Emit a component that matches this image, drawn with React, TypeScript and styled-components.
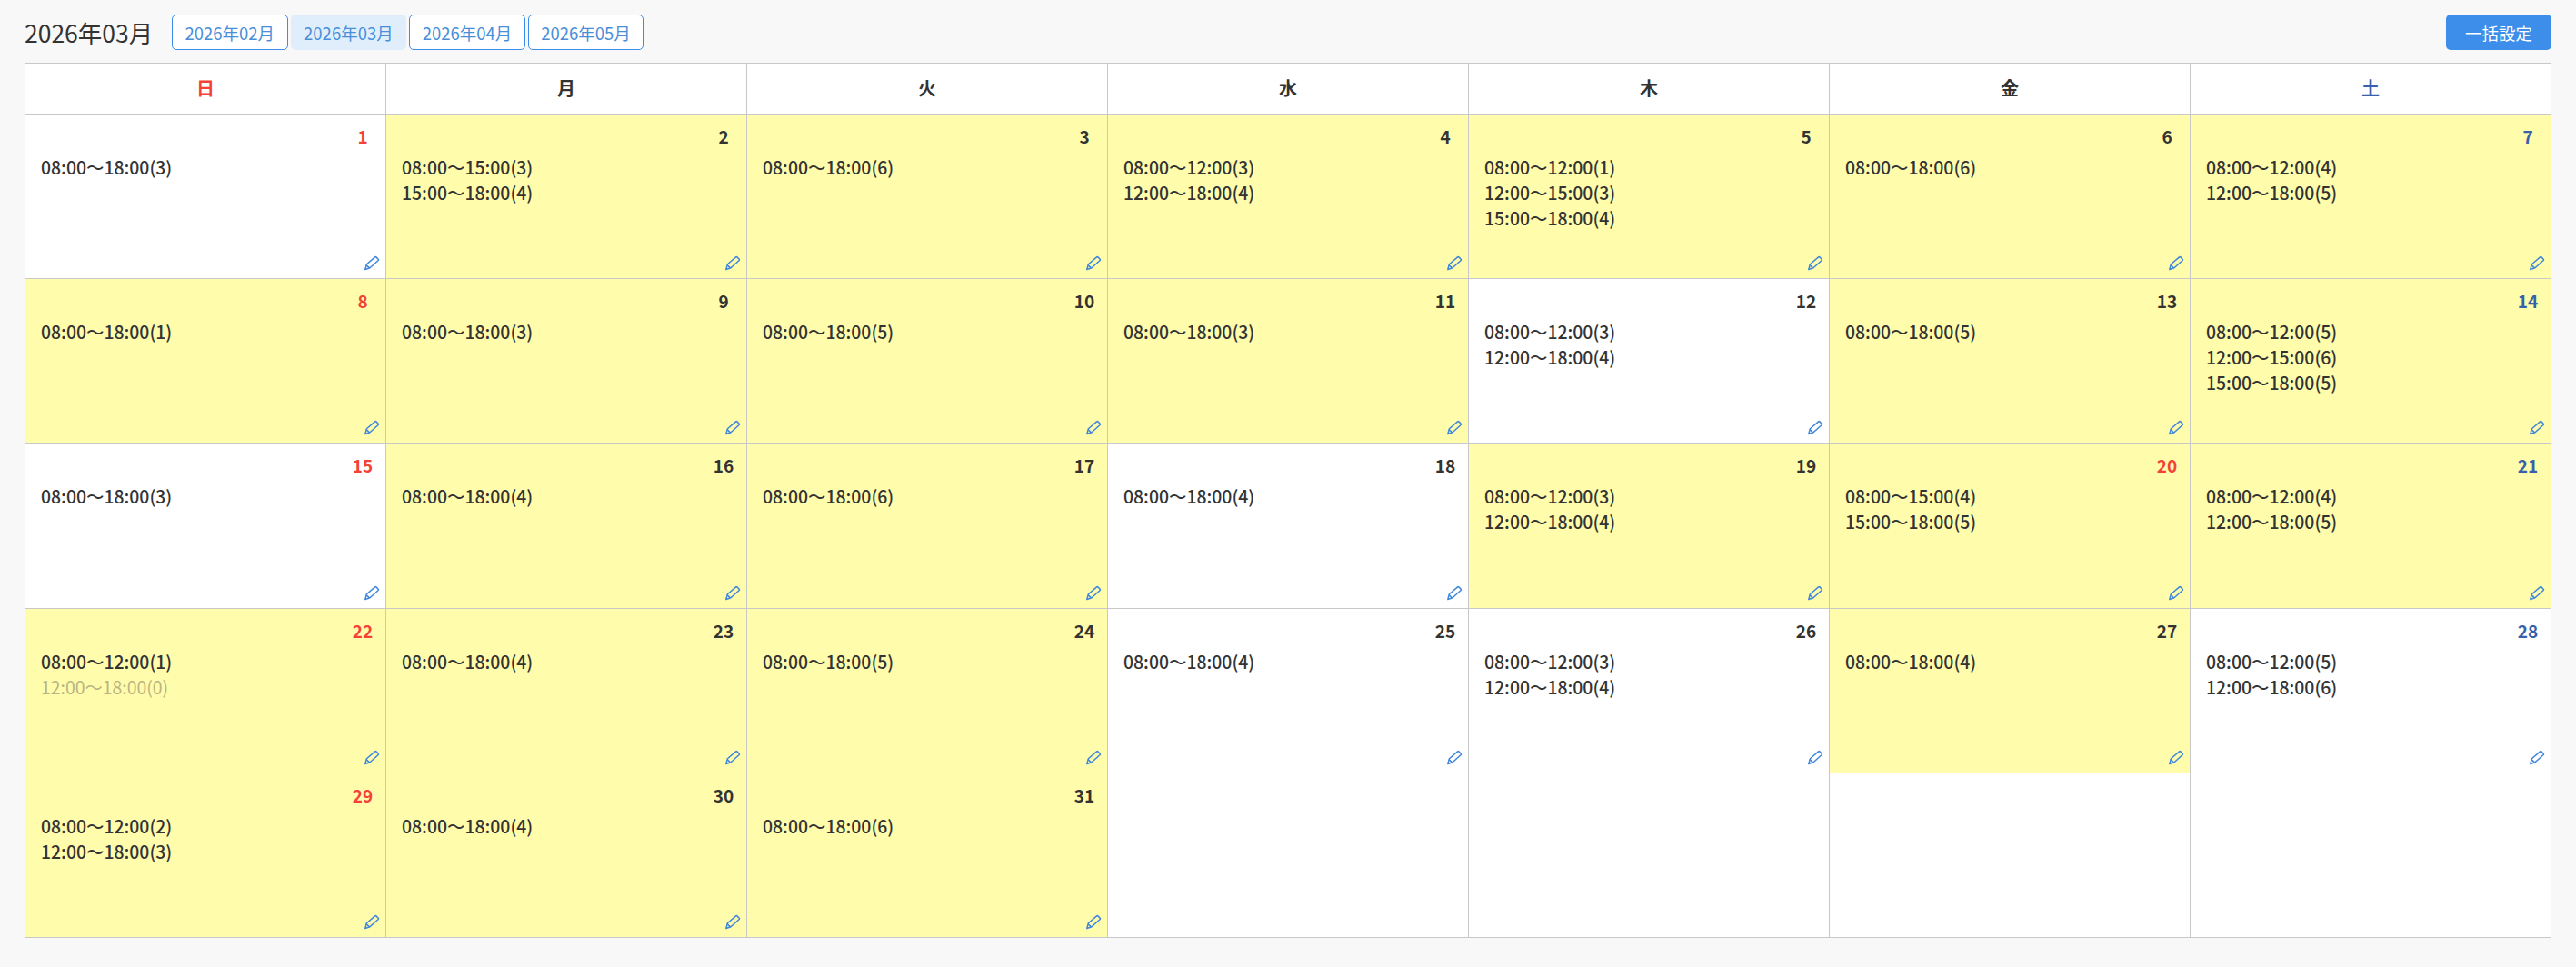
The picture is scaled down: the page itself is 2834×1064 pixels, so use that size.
import styled, { createGlobalStyle } from "styled-components";

const GlobalStyle = createGlobalStyle`
  html, body {
    margin: 0;
    padding: 0;
    background: #f8f8f8;
  }
  body {
    font-family: "Noto Sans CJK JP", "Noto Sans", sans-serif;
    color: #333;
  }
`;

const MONTHS = ["2026年02月", "2026年03月", "2026年04月", "2026年05月"];
const WEEK = ["日", "月", "火", "水", "木", "金", "土"];

type Slot = [string, number];
type Day = { date: number; open: boolean; holiday?: boolean; slots: Slot[] };

const FULL = "08:00〜18:00";
const AM = "08:00〜12:00";
const PM = "12:00〜18:00";

const DAYS: Day[] = [
  { date: 1, open: false, slots: [[FULL, 3]] },
  { date: 2, open: true, slots: [["08:00〜15:00", 3], ["15:00〜18:00", 4]] },
  { date: 3, open: true, slots: [[FULL, 6]] },
  { date: 4, open: true, slots: [[AM, 3], [PM, 4]] },
  { date: 5, open: true, slots: [[AM, 1], ["12:00〜15:00", 3], ["15:00〜18:00", 4]] },
  { date: 6, open: true, slots: [[FULL, 6]] },
  { date: 7, open: true, slots: [[AM, 4], [PM, 5]] },
  { date: 8, open: true, slots: [[FULL, 1]] },
  { date: 9, open: true, slots: [[FULL, 3]] },
  { date: 10, open: true, slots: [[FULL, 5]] },
  { date: 11, open: true, slots: [[FULL, 3]] },
  { date: 12, open: false, slots: [[AM, 3], [PM, 4]] },
  { date: 13, open: true, slots: [[FULL, 5]] },
  { date: 14, open: true, slots: [[AM, 5], ["12:00〜15:00", 6], ["15:00〜18:00", 5]] },
  { date: 15, open: false, slots: [[FULL, 3]] },
  { date: 16, open: true, slots: [[FULL, 4]] },
  { date: 17, open: true, slots: [[FULL, 6]] },
  { date: 18, open: false, slots: [[FULL, 4]] },
  { date: 19, open: true, slots: [[AM, 3], [PM, 4]] },
  { date: 20, open: true, holiday: true, slots: [["08:00〜15:00", 4], ["15:00〜18:00", 5]] },
  { date: 21, open: true, slots: [[AM, 4], [PM, 5]] },
  { date: 22, open: true, slots: [[AM, 1], [PM, 0]] },
  { date: 23, open: true, slots: [[FULL, 4]] },
  { date: 24, open: true, slots: [[FULL, 5]] },
  { date: 25, open: false, slots: [[FULL, 4]] },
  { date: 26, open: false, slots: [[AM, 3], [PM, 4]] },
  { date: 27, open: true, slots: [[FULL, 4]] },
  { date: 28, open: false, slots: [[AM, 5], [PM, 6]] },
  { date: 29, open: true, slots: [[AM, 2], [PM, 3]] },
  { date: 30, open: true, slots: [[FULL, 4]] },
  { date: 31, open: true, slots: [[FULL, 6]] },
];

const dayColor = (index: number, holiday?: boolean) => {
  if (holiday || index % 7 === 0) return "#f44336";
  if (index % 7 === 6) return "#3761ab";
  return "#333";
};

const Page = styled.div`
  padding: 16px 27px 33px;
`;

const Toolbar = styled.div`
  display: flex;
  align-items: center;
  height: 39px;
  margin-bottom: 14px;
`;

const Title = styled.h2`
  width: 162px;
  margin: 0;
  font-size: 26.5px;
  font-weight: 400;
  line-height: 39px;
  color: #333;
`;

const MonthList = styled.div`
  display: flex;
  gap: 3px;
`;

const MonthButton = styled.button<{ $active?: boolean }>`
  width: 127.6px;
  height: 39px;
  padding: 0;
  border: 1px solid ${(p) => (p.$active ? "#e0eefc" : "#3d8eeb")};
  border-radius: 5px;
  background: ${(p) => (p.$active ? "#e0eefc" : "#fff")};
  color: #4a8ed8;
  font-family: inherit;
  font-size: 18.5px;
`;

const BulkButton = styled.button`
  width: 116px;
  height: 39px;
  margin-left: auto;
  padding: 0;
  border: none;
  border-radius: 5px;
  background: #3d8eeb;
  color: #fff;
  font-family: inherit;
  font-size: 18.5px;
`;

const Calendar = styled.div`
  display: grid;
  grid-template-columns: repeat(7, 1fr);
  grid-template-rows: 56px repeat(5, 181.2px);
  border-top: 1px solid #c8c8c8;
  border-left: 1px solid #c8c8c8;
  background: #fff;
`;

const HeadCell = styled.div<{ $color: string }>`
  display: flex;
  align-items: center;
  justify-content: center;
  padding-bottom: 2px;
  border-right: 1px solid #c8c8c8;
  border-bottom: 1px solid #c8c8c8;
  color: ${(p) => p.$color};
  font-size: 20px;
  font-weight: 700;
`;

const DayCell = styled.div<{ $open?: boolean }>`
  position: relative;
  box-sizing: border-box;
  padding-top: 9px;
  border-right: 1px solid #c8c8c8;
  border-bottom: 1px solid #c8c8c8;
  background: ${(p) => (p.$open ? "#fffcab" : "#fff")};
`;

const DateLabel = styled.div<{ $color: string }>`
  width: 30px;
  height: 30px;
  margin: 0 10px 5px auto;
  text-align: center;
  color: ${(p) => p.$color};
  font-size: 19px;
  font-weight: 700;
  line-height: 30px;
`;

const SlotList = styled.div`
  padding: 0 17px;
`;

const SlotRow = styled.div<{ $empty?: boolean }>`
  color: ${(p) => (p.$empty ? "#b9b583" : "#333")};
  font-size: 19.4px;
  font-weight: ${(p) => (p.$empty ? 400 : 500)};
  line-height: 28px;
`;

const EditIcon = styled.svg`
  position: absolute;
  right: 6px;
  bottom: 8px;
  width: 18px;
  height: 17px;
  color: #3f86dd;
`;

function Pencil() {
  return (
    <EditIcon viewBox="0 0 18 16" fill="none" stroke="currentColor" strokeWidth="1.5" strokeLinejoin="round">
      <path d="M3.4 9.2 12.6 1.4a1 1 0 0 1 1.3 0l2.3 2.3a1 1 0 0 1 0 1.3L7 13.2 1.8 15Z" />
      <path d="M3 10 6.4 13.4" />
    </EditIcon>
  );
}

export default function App() {
  const blanks = 35 - DAYS.length;
  return (
    <>
      <GlobalStyle />
      <Page>
        <Toolbar>
          <Title>2026年03月</Title>
          <MonthList>
            {MONTHS.map((m) => (
              <MonthButton key={m} $active={m === "2026年03月"}>
                {m}
              </MonthButton>
            ))}
          </MonthList>
          <BulkButton>一括設定</BulkButton>
        </Toolbar>
        <Calendar>
          {WEEK.map((w, i) => (
            <HeadCell key={w} $color={dayColor(i)}>
              {w}
            </HeadCell>
          ))}
          {DAYS.map((d, i) => (
            <DayCell key={d.date} $open={d.open}>
              <DateLabel $color={dayColor(i, d.holiday)}>{d.date}</DateLabel>
              <SlotList>
                {d.slots.map(([time, count]) => (
                  <SlotRow key={time} $empty={count === 0}>
                    {time}({count})
                  </SlotRow>
                ))}
              </SlotList>
              <Pencil />
            </DayCell>
          ))}
          {Array.from({ length: blanks }, (_, i) => (
            <DayCell key={i} />
          ))}
        </Calendar>
      </Page>
    </>
  );
}
